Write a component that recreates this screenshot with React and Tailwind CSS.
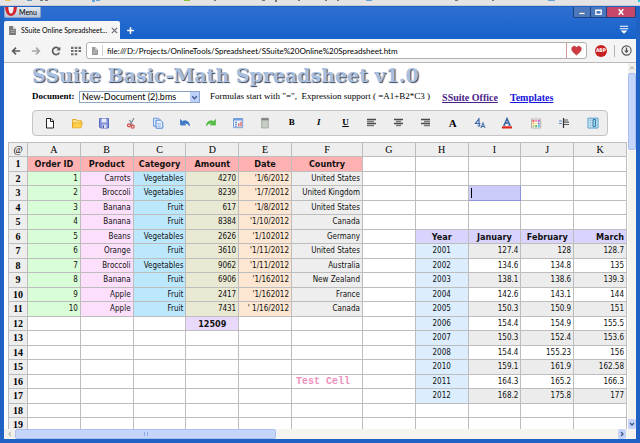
import { useState } from "react";
import clsx from "clsx";

const COLUMNS = ["A", "B", "C", "D", "E", "F", "G", "H", "I", "J", "K"];
const ROW_COUNT = 19;

const ORDERS = [
  ["1", "Carrots", "Vegetables", "4270", "'1/6/2012", "United States"],
  ["2", "Broccoli", "Vegetables", "8239", "'1/7/2012", "United Kingdom"],
  ["3", "Banana", "Fruit", "617", "'1/8/2012", "United States"],
  ["4", "Banana", "Fruit", "8384", "'1/10/2012", "Canada"],
  ["5", "Beans", "Vegetables", "2626", "'1/102012", "Germany"],
  ["6", "Orange", "Fruit", "3610", "'1/11/2012", "United States"],
  ["7", "Broccoli", "Vegetables", "9062", "'1/11/2012", "Australia"],
  ["8", "Banana", "Fruit", "6906", "'1/162012", "New Zealand"],
  ["9", "Apple", "Fruit", "2417", "'1/162012", "France"],
  ["10", "Apple", "Fruit", "7431", "' 1/16/2012", "Canada"],
];

const YEARS = [
  ["2001", "127.4", "128", "128.7"],
  ["2002", "134.6", "134.8", "135"],
  ["2003", "138.1", "138.6", "139.3"],
  ["2004", "142.6", "143.1", "144"],
  ["2005", "150.3", "150.9", "151"],
  ["2006", "154.4", "154.9", "155.5"],
  ["2007", "150.3", "152.4", "153.6"],
  ["2008", "154.4", "155.23", "156"],
  ["2010", "159.1", "161.9", "162.58"],
  ["2011", "164.3", "165.2", "166.3"],
  ["2012", "168.2", "175.8", "177"],
];

const ORDER_COLORS = [
  "bg-[#d9fdd6]",
  "bg-[#fbdffb]",
  "bg-[#bce8fd]",
  "bg-[#e9e9d3]",
  "bg-[#fde7d2]",
  "bg-[#eeeeee]",
];

function buildCells() {
  const cells = {};
  const put = (col, row, text, className) => {
    cells[`${COLUMNS[col]}${row}`] = { text, className };
  };

  ["Order ID", "Product", "Category", "Amount", "Date", "Country"].forEach((text, i) =>
    put(i, 1, text, "bg-[#ffb1b1] text-center text-[9px] font-bold"),
  );
  ORDERS.forEach((order, r) =>
    order.forEach((text, c) => put(c, r + 2, text, clsx("text-right", ORDER_COLORS[c]))),
  );
  put(3, 12, "12509", "bg-[#e9dafb] text-center text-[9px] font-bold");

  ["Year", "January", "February", "March"].forEach((text, i) =>
    put(7 + i, 6, text, clsx("bg-[#d8d4fd] text-[9px] font-bold", i === 3 ? "text-right" : "text-center")),
  );
  YEARS.forEach((year, r) =>
    year.forEach((text, c) => {
      const shade = r % 2 === 0 ? "bg-[#ececec]" : "bg-white";
      put(7 + c, r + 7, text, c === 0 ? "bg-[#dceefe] text-center" : clsx("text-right", shade));
    }),
  );
  put(5, 16, "Test Cell", "");
  return cells;
}

const CELLS = buildCells();

function Svg({ size = 12, children }) {
  return (
    <svg width={size} height={size} viewBox="0 0 12 12" fill="none" aria-hidden="true" className="shrink-0">
      {children}
    </svg>
  );
}

function Lines({ rows }) {
  return (
    <Svg>
      {rows.map(([x1, x2], i) => (
        <path key={i} d={`M${x1} ${2.5 + i * 2}H${x2}`} stroke={i % 2 ? "#777" : "#4a4a4a"} strokeWidth="1.5" />
      ))}
    </Svg>
  );
}

const MAIN_TOOLS = [
  {
    label: "New document",
    icon: (
      <Svg>
        <path d="M2.500 1.500h4.500l2.500 2.500v7h-7z" fill="#fff" stroke="#222" />
        <path d="M6.500 1.500v3h3" stroke="#222" />
      </Svg>
    ),
  },
  {
    label: "Open",
    icon: (
      <Svg>
        <path d="M1.500 10.500v-8h3.800l1 1.300h4.200v2" fill="#fbe08a" stroke="#e5a92c" />
        <path d="M1.300 10.800 2.800 6h8.500L10 10.800z" fill="#ffd24a" stroke="#eaa21f" strokeWidth=".8" />
      </Svg>
    ),
  },
  {
    label: "Save",
    icon: (
      <Svg>
        <path d="M1.500 1.500h9v9.500h-8l-1-1z" fill="#8292d8" stroke="#5a6bbd" />
        <path d="M3.500 1.500h5v4h-5z" fill="#e4e9fb" />
        <path d="M4 7.500h4.500V11H4z" fill="#d8dcee" />
        <path d="M4.700 8.200H6V11H4.700z" fill="#4a5aa6" />
      </Svg>
    ),
  },
  {
    label: "Cut",
    icon: (
      <Svg>
        <path d="M9 1 5.400 7.800M4.500 3l3 5" stroke="#7e8794" strokeWidth="1.200" />
        <circle cx="4" cy="8.300" r="1.500" stroke="#d24848" strokeWidth="1.200" />
        <circle cx="7.700" cy="9.700" r="1.500" stroke="#d24848" strokeWidth="1.200" />
      </Svg>
    ),
  },
  {
    label: "Copy",
    icon: (
      <Svg>
        <path d="M1.500 1.200h5l1.600 1.600v6.400H1.500z" fill="#dbe9fb" stroke="#6d9be0" />
        <path d="M4 3.200h4.500l2.300 2.200v5.800H4z" fill="#eef5ff" stroke="#4d83d2" />
        <path d="M5.400 6.200h3.800M5.400 7.800h3.800M5.400 9.400h3.800" stroke="#86aee6" strokeWidth=".8" />
      </Svg>
    ),
  },
  {
    label: "Undo",
    icon: (
      <Svg>
        <path d="M1.500 2.500v5.500h5.300L5.300 6.500c1.700-.8 3.600-.3 5.200 2.300C10.500 4.500 6.500 2.800 3.300 4.500z" fill="#3f78c8" stroke="#3f78c8" strokeWidth=".8" />
      </Svg>
    ),
  },
  {
    label: "Redo",
    icon: (
      <Svg>
        <path d="M10.500 2.500v5.500H5.200l1.500-1.500C5 5.700 3.100 6.200 1.500 8.800 1.500 4.500 5.500 2.800 8.700 4.500z" fill="#55bd45" stroke="#55bd45" strokeWidth=".8" />
      </Svg>
    ),
  },
  {
    label: "Insert date",
    icon: (
      <Svg>
        <path d="M1.500 1.500h9.200v9.200H1.500z" fill="#e8f1fc" stroke="#7aa2d6" />
        <path d="M1.500 1.500h9.200v2H1.500z" fill="#6f9ee0" />
        <path d="M3 5.200h2M3 7.200h2M3 9.200h2" stroke="#5b80ba" />
        <path d="M6.800 9.500V6.200M9 9.500V4.800" stroke="#db5345" strokeWidth="1.200" />
      </Svg>
    ),
  },
  {
    label: "Calculator",
    icon: (
      <Svg>
        <path d="M2.500 1.200h7v9.800h-7z" fill="#b9c2ba" stroke="#a3aaa3" strokeWidth=".8" />
        <path d="M2.500 1.200h7v2h-7z" fill="#7d857d" />
        <path d="M3.500 5.300h5M3.500 7.200h5M3.500 9.200h5" stroke="#d9ded9" strokeWidth=".8" />
      </Svg>
    ),
  },
  { label: "Bold", text: "B", className: "text-[9px]" },
  { label: "Italic", text: "I", className: "text-[9px] italic" },
  { label: "Underline", text: "U", className: "text-[9px] underline" },
  { label: "Align left", icon: <Lines rows={[[1, 10], [1, 8], [1, 10], [1, 8]]} /> },
  { label: "Align center", icon: <Lines rows={[[1, 10], [3, 8], [1, 10], [3, 8]]} /> },
  { label: "Align right", icon: <Lines rows={[[1, 10], [4, 10], [1, 10], [4, 10]]} /> },
  { label: "Font", text: "A", className: "text-[11px]" },
  {
    label: "Font size",
    icon: (
      <Svg>
        <path d="M5.500 1 1.500 6.500h5M4.800 1.500 5.300 9M3.500 9h3" stroke="#3d68a8" strokeWidth="1.200" />
        <path d="m7 11 2-5 2 5M7.800 9.500h2.600" stroke="#4a74b2" strokeWidth="1.100" />
      </Svg>
    ),
  },
];

const EXTRA_TOOLS = [
  {
    label: "Text colour",
    icon: (
      <Svg>
        <path d="M3.200 8 6 1.500 8.800 8M4.200 6h3.600M2.300 8h2M7.500 8h2.200" stroke="#33609f" strokeWidth="1.400" />
        <path d="M1 9.300h10v2.200H1z" fill="#e0241c" />
      </Svg>
    ),
  },
  {
    label: "Cell colour",
    icon: (
      <Svg>
        <path d="M1.500 2h9.200v9H1.500z" fill="#fff" stroke="#a9a19a" strokeWidth=".8" />
        {["#ef5350", "#f48fb1", "#ba68c8", "#ffb74d", "#fff59d", "#7986cb", "#aed581", "#66bb6a", "#4fc3f7"].map(
          (fill, i) => (
            <rect key={fill} x={2.4 + (i % 3) * 2.7} y={2.9 + Math.floor(i / 3) * 2.6} width="2" height="2" fill={fill} />
          ),
        )}
      </Svg>
    ),
  },
  {
    label: "Insert row",
    icon: (
      <Svg>
        <path d="M5.500 1v10" stroke="#333" strokeWidth="1.200" />
        <path d="M6 3h4M6 5.200h5M6 7.500h5" stroke="#555" strokeWidth="1.200" />
        <path d="M1 4h3M1 6.500h3" stroke="#5c86bd" />
      </Svg>
    ),
  },
  {
    label: "Insert column",
    icon: (
      <Svg>
        <path d="M1 1.200h10v9.800H1z" fill="#e3f2fb" stroke="#4f9ccb" />
        <path d="M1 3.300h10M1 5.800h10M1 8.300h10M3.600 1.500V11" stroke="#8cc0df" strokeWidth=".8" />
        <path d="M6 2.500h2.600v7.200H6z" fill="#9ad0ec" stroke="#246f9f" strokeWidth=".9" />
      </Svg>
    ),
  },
];

function ToolButton({ tool }) {
  return (
    <button
      type="button"
      aria-label={tool.label}
      className={clsx("flex h-6 flex-1 items-center justify-center font-['Liberation_Serif',serif] font-bold", tool.className)}
    >
      {tool.icon || tool.text}
    </button>
  );
}

function DesktopStrip() {
  return (
    <svg viewBox="0 0 640 6" className="h-[6px] w-full shrink-0 bg-[#e4e4e4]" preserveAspectRatio="none" aria-hidden="true">
      <path d="M5 0h6v1H5z" fill="#e9c45c" />
      <path d="M27 0h5v1h-5z" fill="#5f98c2" />
      <path d="M40 0h3v1h-3zM45 0h3v1h-3zM214 0h2v1h-2zM262 0h3v1h-3zM275 0h2v2h-2zM298 0h2v1h-2zM325 0h2v1h-2zM337 0h2v1h-2zM455 0h3v1h-3zM492 0h2v1h-2z" fill="#777" />
      <path d="M92 0h3v2h-3zM96 0h4v1h-4zM366 0h6v1h-6zM548 0h7v1h-7z" fill="#66a5dc" />
      <path d="M184 0h6v1h-6z" fill="#83c437" />
      <path d="M0 5h640v1H0z" fill="#c9ccd4" />
      <path d="M638 0h2v2h-2z" fill="#29c8d8" />
    </svg>
  );
}

function TitleBar() {
  return (
    <header className="shrink-0 bg-linear-to-b from-[#2e70d0] to-[#1562cb]">
      <div className="flex h-[14px] items-start justify-between">
        <button
          type="button"
          className="flex h-[11px] items-center gap-[2px] rounded-b-xs border border-t-0 border-[#8fa3c4] bg-linear-to-b from-[#e5e9f1] to-[#b6c3da] pr-[3px] font-[Lato,sans-serif] text-[7px] leading-none text-black"
        >
          <svg width="12" height="10" viewBox="0 0 12 10" fill="none" aria-hidden="true">
            <path d="M0 0c.5 5.500 2.500 9 6 9s5.500-3.500 6-9H8.500c-.1 4-.9 6.500-2.500 6.500S3.600 4 3.500 0z" fill="#d3262c" />
            <path d="M3.500 0h5c-.1 4-.9 6.500-2.500 6.500S3.600 4 3.500 0z" fill="#f3f3f6" />
          </svg>
          Menu
        </button>
        <div className="flex h-[11px] overflow-hidden rounded-b-xs border border-t-0 border-[#1c427f]">
          <button type="button" aria-label="Minimize" className="flex w-4 items-center justify-center bg-[#4c78bd]">
            <Svg size={10}><path d="M2.500 6.500h7v2.500h-7z" fill="#fff" stroke="#33527e" strokeWidth=".6" /></Svg>
          </button>
          <button type="button" aria-label="Maximize" className="flex w-[17px] items-center justify-center border-x border-[#1c427f] bg-[#4c78bd]">
            <Svg size={9}><path d="M2.500 3h7v5.500h-7z" stroke="#fff" strokeWidth="1.800" /></Svg>
          </button>
          <button type="button" aria-label="Close window" className="flex w-7 items-center justify-center bg-[#c5486a]">
            <Svg size={8}><path d="m2.500 2 7 8m0-8-7 8" stroke="#fff" strokeWidth="2.200" /></Svg>
          </button>
        </div>
      </div>
      <div className="flex h-[18px] items-stretch">
        <div className="flex w-[116px] items-center gap-1 rounded-t-xs bg-[#f5f5f5] pr-1 pl-1">
          <Svg size={9}>
            <path d="M1.500 0h5l4 4v8h-9z" fill="#777" />
            <path d="M6.500 0v4h4" fill="#ddd" />
            <path d="M3 6h6M3 8.500h6" stroke="#b5b5b5" />
          </Svg>
          <span className="flex-1 font-[Lato,sans-serif] text-[7px] whitespace-nowrap text-black">
            SSuite Online Spreadsheet...
          </span>
          <button type="button" aria-label="Close tab" className="shrink-0">
            <Svg size={7}><path d="m1.500 1.500 9 9m0-9-9 9" stroke="#6e6e7c" strokeWidth="2.200" /></Svg>
          </button>
        </div>
        <button type="button" aria-label="New tab" className="ml-1 flex w-3 items-center justify-center">
          <Svg size={9}><path d="M6 1.500v9M1.500 6h9" stroke="#fff" strokeWidth="2" /></Svg>
        </button>
        <button type="button" aria-label="Tab menu" className="ml-auto flex w-6 items-center justify-center">
          <Svg size={10}>
            <path d="M1 1.500h10M1 4.500h10" stroke="#fff" strokeWidth="1.400" />
            <path d="M2 6.500h8l-4 4z" fill="#fff" />
          </Svg>
        </button>
      </div>
    </header>
  );
}

function NavBar() {
  const [url, setUrl] = useState("file:///D:/Projects/OnlineTools/Spreadsheet/SSuite%20Online%20Spreadsheet.htm");

  return (
    <nav className="flex h-6 shrink-0 items-center border-b border-[#b9b9b9] bg-[#f4f4f4] pr-1 pl-[7px]">
      <div className="flex w-[75px] items-center gap-[10px]">
        <button type="button" aria-label="Back">
          <Svg size={10}><path d="M11 6H2m4-4L2 6l4 4" stroke="#5c5c5c" strokeWidth="2" /></Svg>
        </button>
        <button type="button" aria-label="Forward">
          <Svg size={10}><path d="M1 6h9M6 2l4 4-4 4" stroke="#a5a5a5" strokeWidth="2" /></Svg>
        </button>
        <button type="button" aria-label="Reload">
          <Svg size={10}>
            <path d="M9.500 3.300A4.300 4.300 0 1 0 10 8" stroke="#5c5c5c" strokeWidth="2" />
            <path d="M11.200.8v4.700H6.500z" fill="#5c5c5c" />
          </Svg>
        </button>
        <button type="button" aria-label="Speed Dial">
          <Svg size={10}>
            <path d="M0 1h3v2.500H0zM4.500 1h3v2.500h-3zM9 1h3v2.500H9zM0 4.800h3v2.500H0zM4.500 4.800h3v2.500h-3zM9 4.800h3v2.500H9zM0 8.600h3V11H0zM4.500 8.600h3V11h-3z" fill="#6e6e6e" />
          </Svg>
        </button>
      </div>
      <div className="flex h-[17px] min-w-0 flex-1 items-center rounded-[3px] border border-[#b0b0b0] bg-white">
        <span className="flex h-[11px] w-4 items-center justify-center border-r border-[#d0d0d0]">
          <Svg size={8}>
            <path d="M1.500 0h5l4 4v8h-9z" fill="#9b9b9b" />
            <path d="M6.500 0v4h4" fill="#ddd" />
            <path d="M3 6h6M3 8.500h6" stroke="#c9c9c9" />
          </Svg>
        </span>
        <input
          aria-label="Address"
          value={url}
          onChange={(e) => setUrl(e.target.value)}
          className="min-w-0 flex-1 bg-transparent pl-1 font-[Lato,sans-serif] text-[8px] leading-3 text-black outline-none"
        />
        <button type="button" aria-label="Bookmark" className="flex h-full w-5 items-center justify-center border-l border-[#d79a9a]">
          <Svg size={11}>
            <path d="M6 11C2.500 8 .8 6.300.8 4.100.8 1 4.700.4 6 3c1.300-2.600 5.200-2 5.200 1.100C11.200 6.300 9.500 8 6 11z" fill="#cf3b42" stroke="#9e252c" strokeWidth=".6" />
          </Svg>
        </button>
      </div>
      <button
        type="button"
        className="mr-[7px] ml-2 flex size-3 items-center justify-center rounded-full bg-[#c9201f] text-[5px] leading-none font-bold text-white"
      >
        ABP
      </button>
      <button type="button" aria-label="Downloads" className="flex h-3 items-center border-l border-[#b5b5b5] pl-[6px]">
        <Svg size={11}>
          <circle cx="6" cy="6" r="5" stroke="#555" strokeWidth="1.200" />
          <path d="M6 2.800v4" stroke="#555" strokeWidth="1.500" />
          <path d="M3.500 6h5L6 9z" fill="#555" />
        </Svg>
      </button>
    </nav>
  );
}

function DocumentBar() {
  return (
    <div className="mt-1 flex h-[14px] items-center pl-6 text-[9px] whitespace-nowrap text-black">
      <label htmlFor="document" className="w-[47px] font-bold">
        Document:
      </label>
      <div className="relative flex h-3 w-[121px] border border-[#8ba5c9] bg-white">
        <select
          id="document"
          className="w-full appearance-none bg-transparent pl-[2px] font-[Lato,sans-serif] text-[9px] leading-[10px] outline-none"
        >
          <option>New-Document (2).bms</option>
        </select>
        <span className="pointer-events-none absolute inset-y-0 right-0 flex w-[9px] items-center justify-center bg-[#bdd0fa]">
          <Svg size={7}><path d="m2 4 4 4 4-4" stroke="#3e5b93" strokeWidth="2.400" /></Svg>
        </span>
      </div>
      <span className="ml-[10px] whitespace-pre">Formulas start with "=",  Expression support ( =A1+B2*C3 )</span>
      <a href="#office" className="ml-3 text-[10px] font-bold text-[#4b1d88] underline">
        SSuite Office
      </a>
      <a href="#templates" className="ml-3 text-[10px] font-bold text-[#1414e0] underline">
        Templates
      </a>
    </div>
  );
}

function Cell({ id }) {
  const cell = CELLS[id];

  if (id === "I3") {
    return (
      <td className="relative border border-[#8d92dc] bg-[#ccccfa] p-0">
        <input aria-label="Cell I3" className="block h-3 w-full bg-transparent outline-none" />
        <span className="absolute top-[2px] bottom-[2px] left-[2px] w-px bg-black" />
      </td>
    );
  }
  if (id === "F16") {
    return (
      <td className="border border-[#bdbdbd] p-0 pl-1 text-left font-['Liberation_Mono',monospace] text-[10px] font-bold text-[#ee8fbb]">
        {cell.text}
      </td>
    );
  }
  return <td className={clsx("border border-[#bdbdbd] p-0 px-[2px]", cell?.className)}>{cell?.text}</td>;
}

function Sheet() {
  return (
    <table className="mt-[6px] w-full table-fixed border-collapse font-['DejaVu_Sans_Condensed','DejaVu_Sans',sans-serif] text-[8px] leading-3 whitespace-nowrap text-[#111]">
      <colgroup>
        <col className="w-[19px]" />
        {COLUMNS.map((c) => (
          <col key={c} className={c === "F" ? "w-[71px]" : undefined} />
        ))}
      </colgroup>
      <thead>
        <tr className="h-[14px] bg-[#eeeeee] font-['Liberation_Serif',serif] text-[10px] text-black">
          {["@", ...COLUMNS].map((c) => (
            <th key={c} scope="col" className="border border-[#bdbdbd] p-0 font-normal">
              {c}
            </th>
          ))}
        </tr>
      </thead>
      <tbody>
        {Array.from({ length: ROW_COUNT }, (_, i) => i + 1).map((row) => (
          <tr key={row} className="odd:h-[15px] even:h-[14px]">
            <th scope="row" className="border border-[#bdbdbd] bg-[#eeeeee] p-0 font-['Liberation_Serif',serif] text-[10px] leading-3 font-bold text-black">
              {row}
            </th>
            {COLUMNS.map((c) => (
              <Cell key={c} id={`${c}${row}`} />
            ))}
          </tr>
        ))}
      </tbody>
    </table>
  );
}

function ScrollArrow({ label, d, className, muted }) {
  return (
    <button
      type="button"
      aria-label={label}
      className={clsx("flex shrink-0 items-center justify-center", muted ? "bg-[#f1f0ea]" : "rounded-xs bg-[#c3d3fb]", className)}
    >
      <Svg size={6}><path d={d} stroke={muted ? "#bcbcb0" : "#3d5585"} strokeWidth="2.600" /></Svg>
    </button>
  );
}

export default function App() {
  return (
    <div className="flex h-screen flex-col overflow-hidden bg-[#1f62c4] font-['DejaVu_Sans_Condensed','DejaVu_Sans',sans-serif]">
      <DesktopStrip />
      <div className="flex min-h-0 flex-1 flex-col border-x-4 border-t border-b-4 border-[#1f62c4]">
        <TitleBar />
        <NavBar />
        <div className="flex min-h-0 flex-1 bg-white">
          <main className="min-w-0 flex-1 overflow-hidden pr-px pl-1 font-['Liberation_Serif',serif]">
            <h1 className="pt-px pl-6 font-['DejaVu_Serif',serif] text-[19px] leading-[22px] font-bold whitespace-nowrap text-[#a9bfdf] [text-shadow:1px_1px_1px_#33415c]">
              SSuite Basic-Math Spreadsheet v1.0
            </h1>
            <DocumentBar />
            <div role="toolbar" aria-label="Formatting" className="mt-[6px] mr-[19px] ml-6 flex rounded border border-[#c4c4c4] bg-[#eeeeee] pl-1">
              <div className="flex flex-4">
                {MAIN_TOOLS.map((tool) => (
                  <ToolButton key={tool.label} tool={tool} />
                ))}
              </div>
              <div className="flex flex-1">
                {EXTRA_TOOLS.map((tool) => (
                  <ToolButton key={tool.label} tool={tool} />
                ))}
              </div>
            </div>
            <Sheet />
          </main>
          <div className="flex w-2 shrink-0 flex-col bg-[#f5f4ee]">
            <ScrollArrow label="Scroll up" d="m2 8 4-4 4 4" className="h-[10px]" muted />
            <div className="h-[21%] rounded-xs border border-[#aabff0] bg-[#c5d5fc]" />
            <ScrollArrow label="Scroll down" d="m2 4 4 4 4-4" className="mt-auto h-[10px]" />
          </div>
        </div>
        <div className="flex h-[10px] shrink-0 bg-[#f5f4ee] pr-[10px]">
          <ScrollArrow label="Scroll left" d="m8 2-4 4 4 4" className="w-[11px]" muted />
          <div className="flex w-[42%] items-center justify-center gap-[2px] rounded-xs border border-[#aabff0] bg-[#c5d5fc]">
            <span className="h-1 w-px bg-[#8fa9e6]" />
            <span className="h-1 w-px bg-[#8fa9e6]" />
          </div>
          <ScrollArrow label="Scroll right" d="m4 2 4 4-4 4" className="ml-auto w-2" />
        </div>
      </div>
    </div>
  );
}
